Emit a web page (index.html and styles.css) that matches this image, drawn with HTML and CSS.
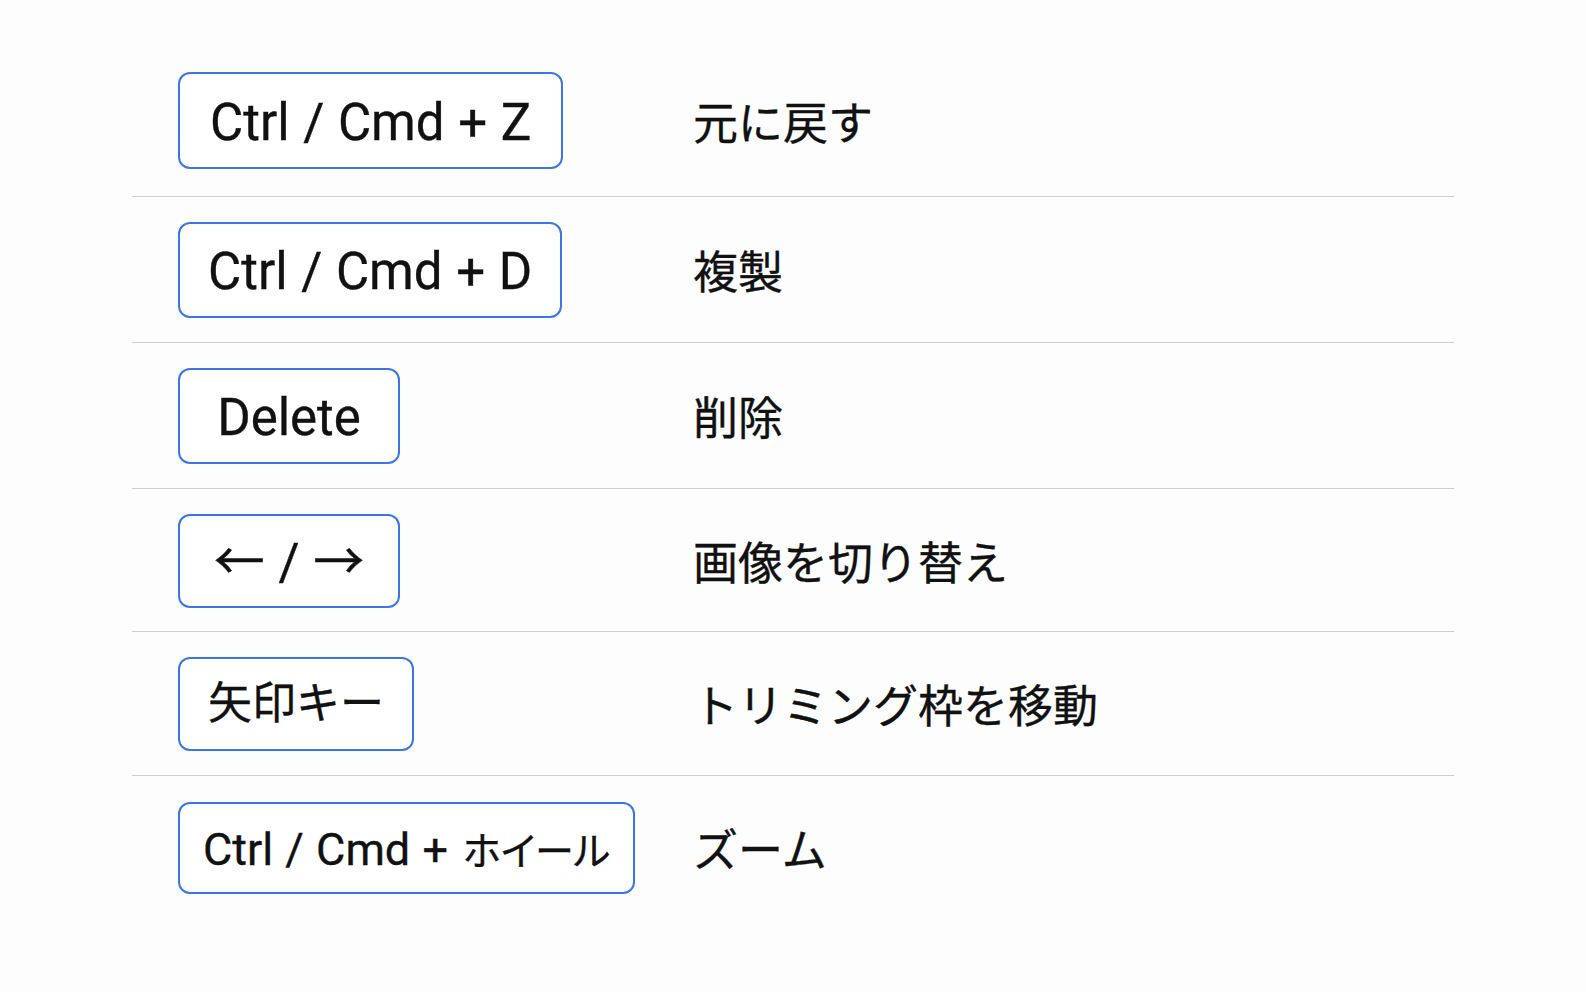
FILE: index.html
```html
<!DOCTYPE html>
<html lang="ja">
<head>
<meta charset="utf-8">
<title>ショートカット</title>
<link rel="stylesheet" href="styles.css">
</head>
<body>
<main class="shortcuts">
  <div class="row row--first">
    <div class="keycell"><kbd class="key key--wide">Ctrl / Cmd + Z</kbd></div>
    <div class="desc">元に戻す</div>
  </div>
  <div class="row">
    <div class="keycell"><kbd class="key key--d">Ctrl / Cmd + D</kbd></div>
    <div class="desc">複製</div>
  </div>
  <div class="row">
    <div class="keycell"><kbd class="key key--min">Delete</kbd></div>
    <div class="desc">削除</div>
  </div>
  <div class="row row--tight">
    <div class="keycell"><kbd class="key key--min key--arrows">← / →</kbd></div>
    <div class="desc">画像を切り替え</div>
  </div>
  <div class="row">
    <div class="keycell"><kbd class="key key--jp">矢印キー</kbd></div>
    <div class="desc">トリミング枠を移動</div>
  </div>
  <div class="row row--last">
    <div class="keycell"><kbd class="key key--small">Ctrl / Cmd + <span class="key__kana">ホイール</span></kbd></div>
    <div class="desc">ズーム</div>
  </div>
</main>
</body>
</html>
```

FILE: styles.css
```css
html, body {
  margin: 0;
  padding: 0;
  background: #fdfdfd;
}

body {
  font-family: Roboto, "Noto Sans CJK JP", sans-serif;
  color: #111;
}

.shortcuts {
  width: 1322px;
  margin: 0 auto;
  padding-top: 47px;
}

.row {
  display: grid;
  grid-template-columns: 515px 1fr;
  align-items: center;
  padding: 25px 46px 24px;
  border-bottom: 1px solid #cdcdcd;
}

.row--first {
  padding-bottom: 27px;
}

.row--tight {
  padding-bottom: 23px;
}

.row--last {
  padding-top: 26px;
  border-bottom: none;
}

.keycell {
  display: flex;
}

.key {
  display: inline-block;
  box-sizing: border-box;
  font-family: Roboto, "Noto Sans CJK JP", sans-serif;
  font-size: 51px;
  line-height: 60px;
  padding: 18px 30px 14px;
  border: 2px solid #3a77e4;
  border-radius: 12px;
  background: #fff;
  color: #111;
  white-space: nowrap;
  text-align: center;
  word-spacing: 1px;
  -webkit-text-stroke: 0.35px #111;
}

.key--wide {
  padding-top: 19px;
}

.key--d {
  padding-left: 28px;
  padding-right: 28px;
}

.key--min {
  min-width: 222px;
}

.key--arrows {
  line-height: 58px;
  padding: 18px 20px 14px;
}

.key--jp {
  font-size: 44px;
  line-height: 62px;
  padding: 14px 28px;
}

.key--small {
  font-size: 45px;
  line-height: 58px;
  padding: 15px 23px 13px;
}

.key__kana {
  font-family: "Noto Sans CJK JP", sans-serif;
  font-size: 39px;
  font-feature-settings: "palt";
  margin-left: 3px;
}

.desc {
  font-family: "Noto Sans CJK JP", sans-serif;
  font-size: 45px;
  line-height: 60px;
  color: #111;
  -webkit-text-stroke: 0.35px #111;
}
```
